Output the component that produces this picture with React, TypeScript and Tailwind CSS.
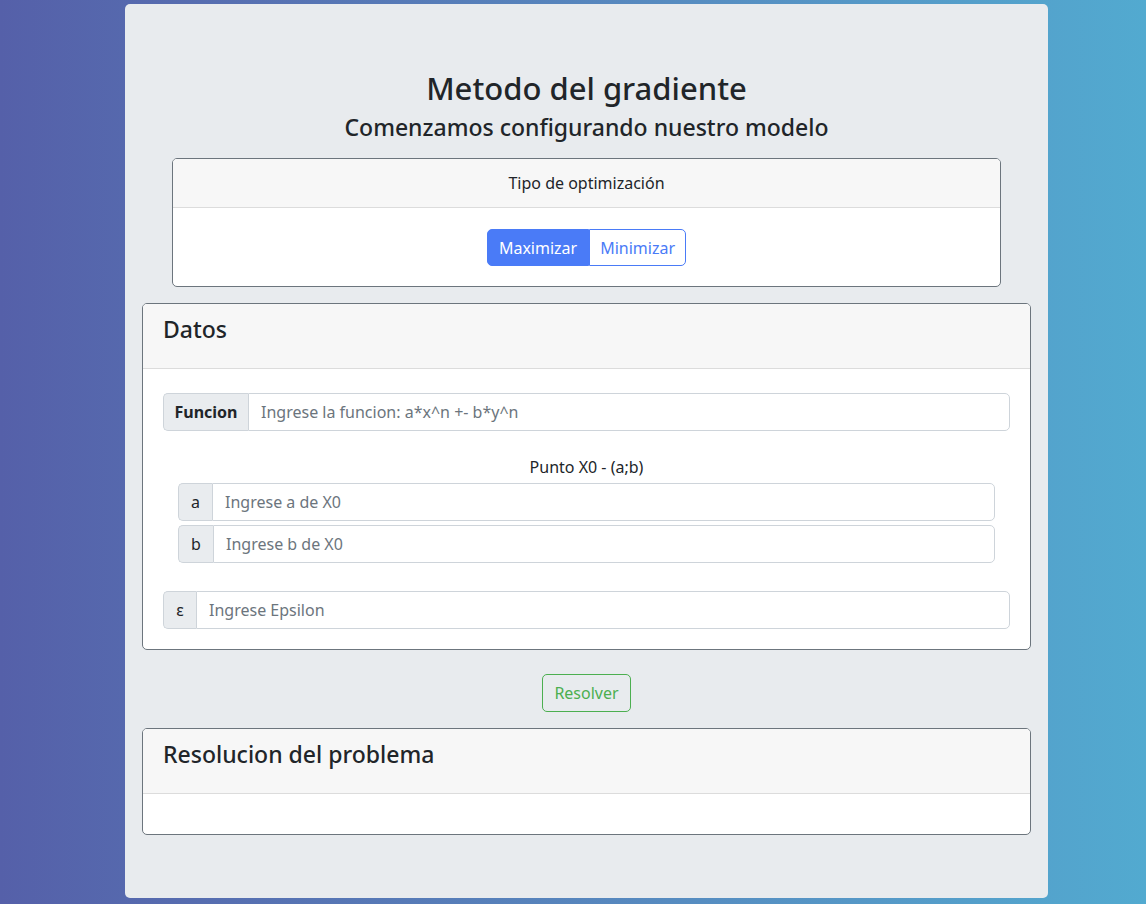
const font = { fontFamily: '"Noto Sans", "Open Sans", sans-serif' };

const InputGroup = ({ label, placeholder, bold = false, labelWidth }: { label: string; placeholder: string; bold?: boolean; labelWidth: string }) => (
  <div className="flex h-[38px]">
    <span className={`${labelWidth} flex items-center justify-center rounded-l-[5px] border border-r-0 border-[#ced4da] bg-[#e9ecef] text-[16px] text-[#212529] ${bold ? "font-bold" : ""}`}>
      {label}
    </span>
    <input
      className="flex-1 min-w-0 rounded-r-[5px] border border-[#ced4da] bg-white px-3 text-[16px] text-[#212529] placeholder-[#6c757d] outline-none"
      placeholder={placeholder}
    />
  </div>
);

export default function App() {
  return (
    <div className="min-h-screen bg-gradient-to-r from-[#5560a9] to-[#52aad0] py-1" style={font}>
      <div className="ml-[125px] w-[923px] h-[894px] rounded-[5px] bg-[#e8ebee] px-[17px] pt-[65px]">
        <h2 className="text-center text-[31px] leading-[38px] font-medium text-[#212529]">Metodo del gradiente</h2>
        <h4 className="mt-[6px] text-center text-[23px] leading-[29px] font-medium text-[#212529]">Comenzamos configurando nuestro modelo</h4>

        <div className="mx-[30px] mt-[16px] rounded-[5px] border border-[#6c757d] bg-white overflow-hidden">
          <div className="h-[49px] flex items-center justify-center border-b border-[#dcdcdc] bg-[#f7f7f7] text-[16px] text-[#212529]">
            Tipo de optimización
          </div>
          <div className="flex justify-center pt-[21px] pb-[20px]">
            <button className="h-[37px] px-[11px] rounded-l-[5px] border border-[#4a7bf7] bg-[#4a7bf7] text-[16px] text-white">Maximizar</button>
            <button className="h-[37px] px-[10px] rounded-r-[5px] border border-[#4a7bf7] bg-white text-[16px] text-[#4a7bf7]">Minimizar</button>
          </div>
        </div>

        <div className="mt-[16px] rounded-[5px] border border-[#6c757d] bg-white overflow-hidden">
          <div className="h-[65px] border-b border-[#dcdcdc] bg-[#f7f7f7] px-[20px] pt-[11px]">
            <h3 className="text-[23px] leading-[29px] font-medium text-[#212529]">Datos</h3>
          </div>
          <div className="px-[20px] pt-[24px] pb-[20px]">
            <InputGroup label="Funcion" placeholder="Ingrese la funcion: a*x^n +- b*y^n" bold labelWidth="w-[85px]" />
            <p className="mt-[24px] text-center text-[16px] leading-[24px] text-[#212529]">Punto X0 - (a;b)</p>
            <div className="mx-[15px] mt-[4px] flex flex-col gap-[4px]">
              <InputGroup label="a" placeholder="Ingrese a de X0" labelWidth="w-[34px]" />
              <InputGroup label="b" placeholder="Ingrese b de X0" labelWidth="w-[35px]" />
            </div>
            <div className="mt-[28px]">
              <InputGroup label="ε" placeholder="Ingrese Epsilon" labelWidth="w-[33px]" />
            </div>
          </div>
        </div>

        <div className="mt-[24px] flex justify-center">
          <button className="h-[38px] px-[11px] rounded-[5px] border border-[#4caf50] text-[16px] text-[#4caf50]">Resolver</button>
        </div>

        <div className="mt-[16px] rounded-[5px] border border-[#6c757d] bg-white overflow-hidden">
          <div className="h-[65px] border-b border-[#dcdcdc] bg-[#f7f7f7] px-[20px] pt-[11px]">
            <h3 className="text-[23px] leading-[29px] font-medium text-[#212529]">Resolucion del problema</h3>
          </div>
          <div className="h-[40px]" />
        </div>
      </div>
    </div>
  );
}
